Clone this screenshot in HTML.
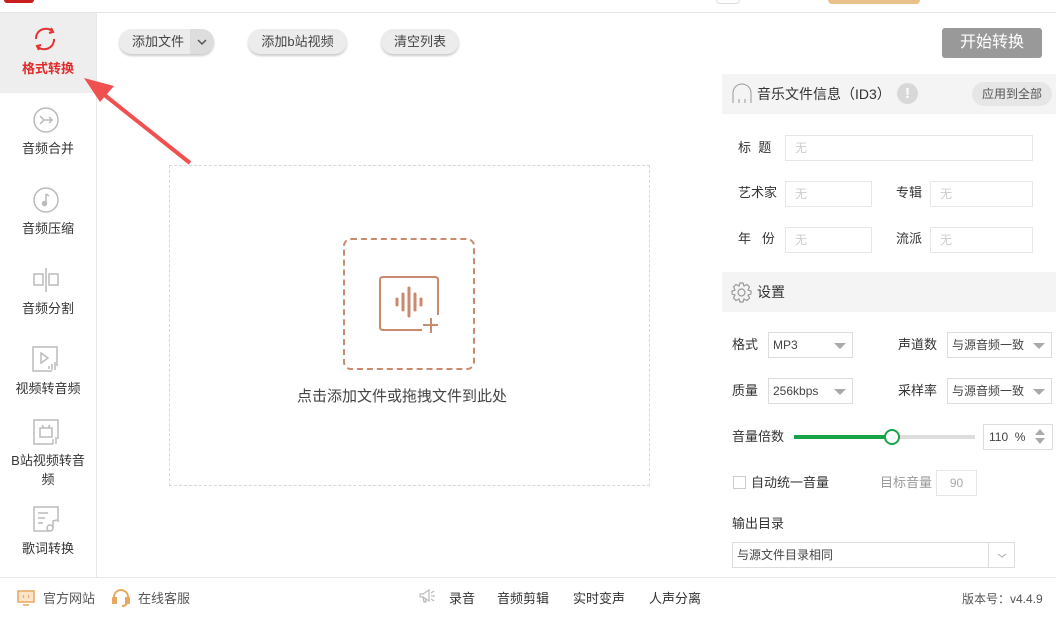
<!DOCTYPE html>
<html><head><meta charset="utf-8"><style>
*{margin:0;padding:0;box-sizing:border-box}
body{width:1056px;height:617px;position:relative;overflow:hidden;background:#fff;font-family:"Liberation Sans","Noto Sans CJK SC",sans-serif;font-size:13px;color:#333}
.a{position:absolute}
.nav{position:absolute;left:0;width:96px;text-align:center;font-size:13px;color:#333;line-height:16px}
.btn{position:absolute;top:29px;height:25px;border-radius:13px;background:#ececec;box-shadow:0 2px 2px #ccc;font-size:13px;color:#444;line-height:25px;text-align:center}
.lbl{position:absolute;font-size:13px;color:#333;line-height:16px}
.inp{position:absolute;height:26px;border:1px solid #e6e6e6;color:#ccc;font-size:12px;line-height:24px;padding-left:9px}
.sel{position:absolute;height:26px;border:1px solid #ddd;font-size:12px;line-height:24px;padding-left:4px;color:#444}
.sel:after{content:"";position:absolute;right:6px;top:10px;border-left:6px solid transparent;border-right:6px solid transparent;border-top:6px solid #aaa}
.ft{position:absolute;top:591px;font-size:13px;color:#333;line-height:16px}
</style></head><body>
<div class="a" style="left:4px;top:0;width:30px;height:3px;background:#c81e1e;border-radius:0 0 6px 6px"></div>
<div class="a" style="left:716px;top:0;width:24px;height:4px;border:1px solid #ddd;border-top:none;border-radius:0 0 12px 12px"></div>
<div class="a" style="left:828px;top:0;width:92px;height:4px;background:#e9c08a;border-radius:0 0 8px 8px"></div>
<div class="a" style="left:0;top:12px;width:1056px;height:1px;background:#e6e6e6"></div>
<div class="a" style="left:96px;top:13px;width:1px;height:564px;background:#e8e8e8"></div>
<div class="a" style="left:0;top:13px;width:96px;height:80px;background:#eeeeee"></div>
<svg class="a" style="left:32px;top:26px" width="26" height="26" viewBox="0 0 26 26" fill="none" stroke="#e53030" stroke-width="2"><path d="M5 8 A10 10 0 0 1 20 5"/><path d="M21 18 A10 10 0 0 1 6 21"/><path d="M4 13 A9 9 0 0 1 5 8"/><path d="M22 13 A9 9 0 0 1 21 18"/><path d="M19 2 L21 6 L17 7" /><path d="M7 24 L5 20 L9 19"/></svg>
<div class="nav" style="top:61px;color:#e02a2a;font-weight:bold">格式转换</div>
<svg class="a" style="left:33px;top:107px" width="26" height="26" fill="none" stroke="#bbb" stroke-width="1.5"><circle cx="13" cy="13" r="12"/><path d="M7 9 L11 13 L7 17 M11 13 H19 M16 10 L19 13 L16 16"/></svg>
<div class="nav" style="top:141px">音频合并</div>
<svg class="a" style="left:33px;top:187px" width="26" height="26" fill="none" stroke="#bbb" stroke-width="1.5"><circle cx="13" cy="13" r="12"/><path d="M13 7 V16 M13 7 L16 9"/><circle cx="11.5" cy="16.5" r="2" fill="#bbb"/></svg>
<div class="nav" style="top:221px">音频压缩</div>
<svg class="a" style="left:33px;top:267px" width="26" height="26" fill="none" stroke="#bbb" stroke-width="1.5"><rect x="1" y="7" width="9" height="11"/><rect x="16" y="7" width="9" height="11"/><path d="M13 1 V25"/></svg>
<div class="nav" style="top:301px">音频分割</div>
<svg class="a" style="left:32px;top:346px" width="27" height="27" fill="none" stroke="#bbb" stroke-width="1.5"><path d="M20 25 H1 V1 H25 V20"/><path d="M9 7 L16 12 L9 17 Z"/><path d="M20 18 V24 M23 16 V24 M17 20 V23"/></svg>
<div class="nav" style="top:381px">视频转音频</div>
<svg class="a" style="left:33px;top:419px" width="27" height="27" fill="none" stroke="#bbb" stroke-width="1.5"><path d="M20 25 H1 V1 H25 V20"/><rect x="7" y="9" width="12" height="9"/><path d="M9 6 L11 9 M17 6 L15 9"/><path d="M20 20 V25 M23 18 V25"/></svg>
<div class="nav" style="top:451px;line-height:19px">B站视频转音<br>频</div>
<svg class="a" style="left:33px;top:506px" width="27" height="27" fill="none" stroke="#bbb" stroke-width="1.5"><path d="M17 25 H1 V1 H25 V16"/><path d="M5 7 H15 M5 12 H12 M5 17 H10"/><circle cx="17" cy="22" r="3"/><path d="M20 22 V15 L24 14"/></svg>
<div class="nav" style="top:541px">歌词转换</div>
<svg class="a" style="left:80px;top:68px" width="115" height="100"><path d="M110 95 L22 25" stroke="#f05050" stroke-width="4"/><path d="M4 10 L34 18 L20 34 Z" fill="#f05050"/></svg>
<div class="btn" style="left:119px;width:95px;text-align:left;padding-left:13px">添加文件<span style="position:absolute;right:0;top:0;width:24px;height:25px;background:#ddd;border-radius:0 13px 13px 0"><svg width="24" height="25" fill="none" stroke="#555" stroke-width="1.5"><path d="M8 11 L12 15 L16 11"/></svg></span></div>
<div class="btn" style="left:248px;width:99px">添加b站视频</div>
<div class="btn" style="left:381px;width:78px">清空列表</div>
<div class="a" style="left:942px;top:28px;width:100px;height:30px;background:#999;border-radius:3px;color:#fff;font-size:16px;text-align:center;line-height:30px">开始转换</div>
<div class="a" style="left:169px;top:165px;width:481px;height:321px;border:1px dashed #d8d8d8"></div>
<div class="a" style="left:343px;top:238px;width:132px;height:132px;border:2px dashed #c98a6e;border-radius:8px"></div>
<svg class="a" style="left:378px;top:275px" width="62" height="58" fill="none" stroke="#c98a6e" stroke-width="2"><path d="M44 55 H5 Q2 55 2 52 V5 Q2 2 5 2 H57 Q60 2 60 5 V40"/><path d="M19 24 V30 M25 19 V35 M31 13 V41 M37 19 V35 M43 24 V30" stroke-width="3" stroke-linecap="round"/><path d="M53 43 V58 M45 50 H60"/></svg>
<div class="a" style="left:297px;top:388px;font-size:15px;color:#444;line-height:18px">点击添加文件或拖拽文件到此处</div>
<div class="a" style="left:722px;top:74px;width:334px;height:40px;background:#f4f4f4"></div>
<svg class="a" style="left:732px;top:83px" width="20" height="22" fill="none" stroke="#999" stroke-width="1"><path d="M1 20 V10 A9 9 0 0 1 19 10 V20 M7 16 V20 M13 16 V20"/></svg>
<div class="a" style="left:757px;top:86px;font-size:14px;color:#333;line-height:17px">音乐文件信息（ID3）</div>
<div class="a" style="left:897px;top:83px;width:21px;height:21px;border-radius:50%;background:#d8d8d8;color:#fff;font-weight:bold;text-align:center;line-height:21px;font-size:15px">!</div>
<div class="a" style="left:972px;top:82px;width:80px;height:24px;border-radius:12px;background:#e6e6e6;font-size:12px;color:#555;text-align:center;line-height:24px">应用到全部</div>
<div class="lbl" style="left:738px;top:140px">标&nbsp;&nbsp;题</div>
<div class="inp" style="left:785px;top:135px;width:248px">无</div>
<div class="lbl" style="left:738px;top:185px">艺术家</div>
<div class="inp" style="left:785px;top:181px;width:87px">无</div>
<div class="lbl" style="left:896px;top:185px">专辑</div>
<div class="inp" style="left:930px;top:181px;width:103px">无</div>
<div class="lbl" style="left:738px;top:231px">年&nbsp;&nbsp;&nbsp;份</div>
<div class="inp" style="left:785px;top:227px;width:87px">无</div>
<div class="lbl" style="left:896px;top:231px">流派</div>
<div class="inp" style="left:930px;top:227px;width:103px">无</div>
<div class="a" style="left:722px;top:272px;width:334px;height:40px;background:#f4f4f4"></div>
<svg class="a" style="left:731px;top:282px" width="21" height="21" fill="none" stroke="#999" stroke-width="1.2"><circle cx="10.5" cy="10.5" r="3.5"/><path d="M9 1 H12 L13 4 L16 2.5 L18.5 5 L17 8 L20 9 V12 L17 13 L18.5 16 L16 18.5 L13 17 L12 20 H9 L8 17 L5 18.5 L2.5 16 L4 13 L1 12 V9 L4 8 L2.5 5 L5 2.5 L8 4 Z"/></svg>
<div class="a" style="left:757px;top:284px;font-size:14px;line-height:17px">设置</div>
<div class="lbl" style="left:732px;top:337px">格式</div>
<div class="sel" style="left:768px;top:332px;width:85px">MP3</div>
<div class="lbl" style="left:898px;top:337px">声道数</div>
<div class="sel" style="left:947px;top:332px;width:105px">与源音频一致</div>
<div class="lbl" style="left:732px;top:383px">质量</div>
<div class="sel" style="left:768px;top:378px;width:85px">256kbps</div>
<div class="lbl" style="left:898px;top:383px">采样率</div>
<div class="sel" style="left:947px;top:378px;width:105px">与源音频一致</div>
<div class="lbl" style="left:732px;top:429px">音量倍数</div>
<div class="a" style="left:794px;top:435px;width:181px;height:4px;background:#ddd"></div>
<div class="a" style="left:794px;top:435px;width:98px;height:4px;background:#16a34a"></div>
<div class="a" style="left:884px;top:429px;width:16px;height:16px;border-radius:50%;border:2px solid #16a34a;background:#fff"></div>
<div class="a" style="left:983px;top:424px;width:70px;height:26px;border:1px solid #ddd;font-size:12px;line-height:24px;padding-left:5px;color:#444">110&nbsp;&nbsp;%</div>
<div class="a" style="left:1035px;top:429px;border:5px solid transparent;border-bottom:6px solid #aaa;border-top:none"></div>
<div class="a" style="left:1035px;top:438px;border:5px solid transparent;border-top:6px solid #aaa;border-bottom:none"></div>
<div class="a" style="left:733px;top:476px;width:13px;height:13px;border:1px solid #ccc"></div>
<div class="lbl" style="left:751px;top:475px">自动统一音量</div>
<div class="lbl" style="left:880px;top:475px;color:#999">目标音量</div>
<div class="a" style="left:936px;top:470px;width:41px;height:26px;border:1px solid #e6e6e6;color:#aaa;font-size:12px;text-align:center;line-height:24px">90</div>
<div class="lbl" style="left:732px;top:516px">输出目录</div>
<div class="a" style="left:732px;top:542px;width:283px;height:26px;border:1px solid #ddd;font-size:12px;line-height:24px;padding-left:4px;color:#444">与源文件目录相同<span style="position:absolute;right:0;top:0;width:26px;height:24px;border-left:1px solid #ddd"><svg width="26" height="24" fill="none" stroke="#aaa" stroke-width="1"><path d="M9 11 L13 14 L17 11"/></svg></span></div>
<div class="a" style="left:0;top:577px;width:1056px;height:1px;background:#e8e8e8"></div>
<svg class="a" style="left:17px;top:590px" width="18" height="16" fill="none" stroke="#e9a860" stroke-width="1.5"><rect x="1" y="1" width="16" height="11" fill="#fbe6cc"/><path d="M6 15 H12"/><path d="M7 5 L6 6.5 L7 8 M11 5 L12 6.5 L11 8" stroke-width="1"/></svg>
<div class="ft" style="left:43px;color:#555">官方网站</div>
<svg class="a" style="left:112px;top:589px" width="18" height="19" fill="none" stroke="#e9a860" stroke-width="2"><path d="M2 11 V8 A7 7 0 0 1 16 8 V11"/><rect x="1" y="9" width="3" height="5" fill="#e9a860"/><rect x="14" y="9" width="3" height="5" fill="#e9a860"/><path d="M15 14 Q14 17 10 17"/></svg>
<div class="ft" style="left:138px;color:#555">在线客服</div>
<svg class="a" style="left:418px;top:588px" width="18" height="16" fill="none" stroke="#bbb" stroke-width="1.2"><path d="M2 6 H5 L11 2 V13 L5 9 H2 Z"/><path d="M5 9 L6 14 H8 L7 10"/><path d="M13 5 L16 3 M13 8 H17 M13 11 L16 13"/></svg>
<div class="ft" style="left:449px">录音</div>
<div class="ft" style="left:497px">音频剪辑</div>
<div class="ft" style="left:573px">实时变声</div>
<div class="ft" style="left:649px">人声分离</div>
<div class="ft" style="left:962px;font-size:12px;color:#555">版本号：v4.4.9</div>
</body></html>
